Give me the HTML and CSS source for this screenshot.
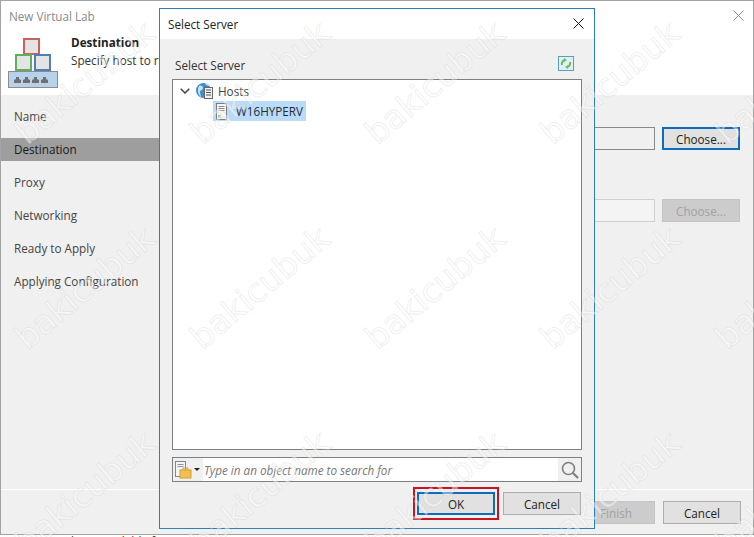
FILE: index.html
```html
<!DOCTYPE html>
<html lang="en">
<head>
<meta charset="utf-8">
<title>New Virtual Lab</title>
<link rel="stylesheet" href="styles.css">
</head>
<body>
<div class="screen">
  <div class="window">
    <header class="header">
      <div class="titlebar">
        <span class="window-title">New Virtual Lab</span>
        <svg class="close close-muted" viewBox="0 0 11 11"><path d="M.5.5l10 10M10.5.5l-10 10"/></svg>
      </div>
      <div class="banner">
        <svg class="lab-icon" viewBox="0 0 50 50" width="50" height="50">
          <rect x="16" y="1" width="15" height="15" fill="#e4e4e4" stroke="#c8615f" stroke-width="2"/>
          <rect x="8" y="17" width="15" height="15" fill="#e4e4e4" stroke="#5fae5a" stroke-width="2"/>
          <rect x="27" y="17" width="15" height="15" fill="#e4e4e4" stroke="#4f7fb5" stroke-width="2"/>
          <rect x=".5" y="33.5" width="49" height="16" fill="#b9d2ec" stroke="#8c8c8c"/>
          <g fill="#707070">
            <path d="M6 45v-3l2-1v-2h3v2l2 1v3z"/>
            <path d="M15 45v-3l2-1v-2h3v2l2 1v3z"/>
            <path d="M24 45v-3l2-1v-2h3v2l2 1v3z"/>
            <path d="M33 45v-3l2-1v-2h3v2l2 1v3z"/>
          </g>
        </svg>
        <div class="banner-text">
          <strong class="banner-title">Destination</strong>
          <span>Specify host to run the virtual lab on.</span>
        </div>
      </div>
    </header>
    <div class="main">
      <nav class="steps">
        <div class="step">Name</div>
        <div class="step step-active">Destination</div>
        <div class="step">Proxy</div>
        <div class="step">Networking</div>
        <div class="step">Ready to Apply</div>
        <div class="step">Applying Configuration</div>
      </nav>
      <div class="content">
        <div class="field-row">
          <div class="input"></div>
          <button class="btn btn-focus">Choose...</button>
        </div>
        <div class="field-row">
          <div class="input input-disabled"></div>
          <button class="btn btn-disabled">Choose...</button>
        </div>
      </div>
    </div>
    <footer class="footer">
      <button class="btn btn-disabled">&lt; Previous</button>
      <button class="btn btn-disabled">Finish</button>
      <button class="btn">Cancel</button>
    </footer>
  </div>
  <div class="under">what's available for restore point</div>

  <section class="dialog">
    <div class="dialog-title">
      <span>Select Server</span>
      <svg class="close" viewBox="0 0 11 11"><path d="M.5.5l10 10M10.5.5l-10 10"/></svg>
    </div>
    <div class="dialog-body">
      <div class="label-row">
        <span>Select Server</span>
        <svg class="refresh" viewBox="0 0 16 15" width="16" height="15">
          <rect x=".5" y=".5" width="15" height="14" fill="#dff0f7" stroke="#5b9fc0"/>
          <path d="M4 9a4 4 0 0 1 3-5M12 6a4 4 0 0 1-3 5" fill="none" stroke="#6cbb5a" stroke-width="2"/>
          <path d="M6 2l3 2-3 2zM10 13l-3-2 3-2z" fill="#6cbb5a"/>
        </svg>
      </div>
      <div class="tree">
        <div class="tree-row tree-root">
          <svg class="chevron" viewBox="0 0 10 6" width="10" height="6"><path d="M.7.7L5 5l4.3-4.3" fill="none" stroke="#444" stroke-width="1.5"/></svg>
          <svg class="tree-icon" viewBox="0 0 17 17" width="17" height="17">
            <circle cx="7.500" cy="8.500" r="7.500" fill="#3d8ecb"/>
            <path d="M3 4c2-1 4 0 4 2s-3 2-3 4 1 4 1 5C2 13 1 7 3 4zM9 1c2 0 4 1 5 3-2 0-5-1-5-3z" fill="#c9e3f5"/>
            <rect x="8.500" y="5.500" width="8" height="11" fill="#f2f2f2" stroke="#666"/>
            <path d="M10 8h5M10 10.500h5M10 13h5" stroke="#555"/>
          </svg>
          <span>Hosts</span>
        </div>
        <div class="tree-row tree-child">
          <div class="tree-selected">
            <svg class="server-icon" viewBox="0 0 11 17" width="11" height="17">
              <rect x=".5" y=".5" width="10" height="16" fill="#f4f4f4" stroke="#7d7d7d"/>
              <path d="M2.500 3.500h6M2.500 5.500h6M2.500 7.500h6" stroke="#8a8a8a"/>
              <rect x="2" y="12" width="3" height="3" fill="#9ccf90"/>
            </svg>
            <span class="tree-selected-text">W16HYPERV</span>
          </div>
        </div>
      </div>
      <div class="search">
        <div class="search-type">
          <svg viewBox="0 0 17 18" width="17" height="18">
            <rect x=".5" y=".5" width="10" height="15" fill="#f4f4f4" stroke="#7d8a96"/>
            <path d="M2.500 3.500h6M2.500 5.500h6" stroke="#8a97a3"/>
            <rect x="5" y="9" width="11" height="8" fill="#f2c04f" stroke="#d89b30"/>
            <path d="M8 9V7h5v2" fill="none" stroke="#d89b30"/>
          </svg>
          <span class="caret"></span>
        </div>
        <span class="search-placeholder">Type in an object name to search for</span>
        <div class="search-go">
          <svg viewBox="0 0 18 18" width="18" height="18"><circle cx="7.500" cy="7.500" r="6" fill="none" stroke="#7f7f7f" stroke-width="1.600"/><path d="M12 12l5 5" stroke="#7f7f7f" stroke-width="2.200"/></svg>
        </div>
      </div>
      <div class="dialog-actions">
        <button class="btn btn-focus btn-marked">OK<span class="marker"></span></button>
        <button class="btn">Cancel</button>
      </div>
    </div>
  </section>

  <div class="watermarks">
    <div class="wm"><span>bakicubuk</span></div><div class="wm"><span>bakicubuk</span></div><div class="wm"><span>bakicubuk</span></div><div class="wm"><span>bakicubuk</span></div><div class="wm"><span>bakicubuk</span></div>
    <div class="wm"><span>bakicubuk</span></div><div class="wm"><span>bakicubuk</span></div><div class="wm"><span>bakicubuk</span></div><div class="wm"><span>bakicubuk</span></div><div class="wm"><span>bakicubuk</span></div>
    <div class="wm"><span>bakicubuk</span></div><div class="wm"><span>bakicubuk</span></div><div class="wm"><span>bakicubuk</span></div><div class="wm"><span>bakicubuk</span></div><div class="wm"><span>bakicubuk</span></div>
  </div>
</div>
</body>
</html>
```

FILE: styles.css
```css
* { box-sizing: border-box; }
html, body { margin: 0; padding: 0; }
body {
  width: 754px;
  height: 537px;
  overflow: hidden;
  background: #fff;
  font-family: "Open Sans", "Noto Sans", "Liberation Sans", sans-serif;
  font-size: 11.7px;
  color: #222;
}
.screen { position: relative; width: 754px; height: 537px; overflow: hidden; }

.window {
  display: flex;
  flex-direction: column;
  width: 754px;
  height: 535px;
  background: #f0f0f0;
  border: 1px solid #a3a3a3;
}
.header { height: 94px; background: #fff; flex: none; }
.titlebar {
  display: flex;
  justify-content: space-between;
  align-items: center;
  height: 29px;
  padding: 0 9px 0 8px;
}
.window-title { color: #8a8a8a; }
.close { width: 11px; height: 11px; fill: none; stroke: #111; stroke-width: 1; }
.close-muted { stroke: #8c8c8c; }
.banner { display: flex; padding: 8px 0 0 7px; }
.lab-icon { flex: none; }
.banner-text { display: flex; flex-direction: column; margin: -5px 0 0 13px; line-height: 18px; color: #333; }
.banner-title { font-weight: 700; color: #222; }

.main { flex: 1; display: flex; min-height: 0; }
.steps { width: 170px; flex: none; display: flex; flex-direction: column; gap: 10px; padding-top: 10px; }
.step { height: 23px; line-height: 23px; padding-left: 13px; color: #444; }
.step-active { background: #9e9e9e; color: #1a1a1a; }
.content { flex: 1; display: flex; flex-direction: column; gap: 49px; padding: 32px 13px 0 10px; }
.field-row { display: flex; gap: 7px; height: 23px; }
.input { flex: 1; background: #f0f0f0; border: 1px solid #8a8a8a; }
.input-disabled { border-color: #cfcfcf; background: #f4f4f4; }

.btn {
  width: 78px;
  height: 23px;
  padding: 0;
  flex: none;
  font: inherit;
  color: #222;
  background: #e1e1e1;
  border: 1px solid #adadad;
  border-radius: 0;
}
.btn-focus { border: 2px solid #0f6cbd; }
.btn-disabled { background: #cccccc; border-color: #c4c4c4; color: #a2a2a2; }

.footer {
  flex: none;
  height: 45px;
  display: flex;
  justify-content: flex-end;
  gap: 8px;
  padding: 11px 12px 0 0;
  border-top: 1px solid #fff;
}
.under { height: 2px; line-height: 12px; padding-left: 62px; overflow: hidden; color: #333; }

.dialog {
  position: absolute;
  left: 159px;
  top: 8px;
  width: 436px;
  height: 521px;
  display: flex;
  flex-direction: column;
  background: #f0f0f0;
  border: 1px solid #2e7eb8;
}
.dialog-title {
  flex: none;
  height: 30px;
  display: flex;
  justify-content: space-between;
  align-items: center;
  padding: 0 10px 1px 8px;
  background: #fff;
  color: #222;
}
.dialog-body { flex: 1; display: flex; flex-direction: column; padding: 0 12px 13px; min-height: 0; }
.label-row {
  flex: none;
  height: 40px;
  display: flex;
  justify-content: space-between;
  align-items: center;
  padding: 12px 8px 0 3px;
  color: #333;
}
.refresh { margin-top: -3px; }
.tree { flex: 1; min-height: 0; background: #fff; border: 1px solid #7f7f7f; }
.tree-row { display: flex; align-items: center; }
.tree-root { height: 21px; padding-left: 7px; gap: 6px; color: #444; }
.tree-icon { flex: none; }
.tree-root span { margin-left: -1px; }
.tree-child { height: 20px; padding-left: 40px; }
.tree-selected { display: flex; align-items: center; width: 93px; height: 20px; padding-left: 3px; background: #bbdcf9; }
.tree-selected-text { margin-left: 9px; color: #1f2a36; }

.search {
  flex: none;
  height: 25px;
  margin-top: 7px;
  display: flex;
  align-items: stretch;
  background: #fff;
  border: 1px solid #7f7f7f;
}
.search-type { width: 30px; flex: none; display: flex; align-items: center; gap: 2px; padding-left: 2px; background: #f0f0f0; }
.caret { width: 0; height: 0; border: 3px solid transparent; border-top: 3px solid #222; border-bottom: 0; }
.search-placeholder { flex: 1; align-self: center; padding-left: 1px; font-style: italic; color: #777; }
.search-go { width: 23px; flex: none; display: flex; align-items: center; justify-content: center; background: #f0f0f0; }

.dialog-actions { flex: none; display: flex; justify-content: flex-end; gap: 8px; margin-top: 10px; padding-right: 1px; }
.btn-marked { position: relative; }
.marker { position: absolute; inset: -7px -6px -7px -6px; border: 2px solid #c8141e; }

.watermarks {
  position: absolute;
  left: -3px;
  top: -20px;
  display: grid;
  grid-template-columns: repeat(5, 175px);
  grid-auto-rows: 205px;
  pointer-events: none;
}
.wm { display: flex; align-items: center; justify-content: center; overflow: visible; }
.wm span {
  transform: rotate(-40deg);
  font-family: "DejaVu Sans", sans-serif;
  font-size: 33px;
  white-space: nowrap;
  color: rgba(255, 255, 255, .45);
  -webkit-text-stroke: 1px rgba(190, 190, 190, .24);
}
```
